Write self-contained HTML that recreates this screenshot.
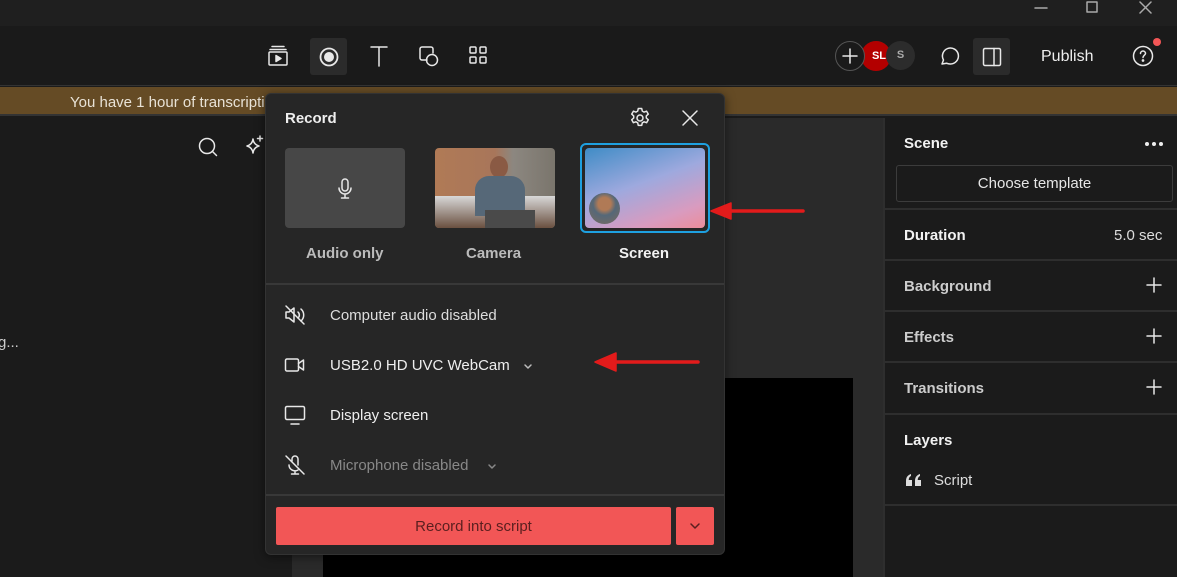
<!DOCTYPE html>
<html><head><meta charset="utf-8"><style>
*{box-sizing:border-box;margin:0;padding:0}
body{width:1177px;height:577px;overflow:hidden;background:#1b1b1b;font-family:"Liberation Sans",sans-serif;color:#e6e6e6;position:relative}
.a{position:absolute}
svg{position:absolute;fill:none;stroke:#e8e8e8;stroke-width:1.5;stroke-linecap:round;stroke-linejoin:round}
.t{position:absolute;font-size:15px;white-space:nowrap}
.b{font-weight:bold}
.row{position:absolute;left:884px;width:293px;border-top:2px solid #2e2e2e}
</style></head><body>
<div class="a" style="left:0;top:0;width:1177px;height:26px;background:#1f1f1f"></div>
<svg style="left:1030px;top:0" width="140" height="20" viewBox="0 0 140 20"><path d="M5 8h12" stroke="#aaa"/><path d="M57 2h10v10H57z" stroke="#aaa"/><path d="M110 2l11 11M121 2l-11 11" stroke="#aaa"/></svg>
<div class="a" style="left:0;top:26px;width:1177px;height:60px;background:#1a1a1a;border-bottom:1px solid #333"></div>
<svg style="left:266px;top:44px" width="24" height="24" viewBox="0 0 24 24"><path d="M6 2.5h12M4 5.5h16"/><rect x="3" y="8" width="18" height="13" rx="1"/><path d="M10 11.5v6l5-3z" fill="#e8e8e8"/></svg>
<div class="a" style="left:310px;top:38px;width:37px;height:37px;background:#2b2b2b;border-radius:3px"></div>
<svg style="left:317px;top:45px" width="24" height="24" viewBox="0 0 24 24"><circle cx="12" cy="12" r="8.5" stroke-width="1.8"/><circle cx="12" cy="12" r="5" fill="#e8e8e8" stroke="none"/></svg>
<svg style="left:367px;top:44px" width="24" height="24" viewBox="0 0 24 24"><path d="M4 3h16M12 3v19"/></svg>
<svg style="left:417px;top:44px" width="24" height="24" viewBox="0 0 24 24"><path d="M10 16H5a2 2 0 01-2-2V5a2 2 0 012-2h9a2 2 0 012 2v4"/><circle cx="15" cy="16" r="5.5"/></svg>
<svg style="left:467px;top:44px" width="24" height="24" viewBox="0 0 24 24"><rect x="3" y="3" width="6" height="6" rx="1"/><rect x="13" y="3" width="6" height="6" rx="1"/><rect x="3" y="13" width="6" height="6" rx="1"/><rect x="13" y="13" width="6" height="6" rx="1"/></svg>
<div class="a" style="left:862px;top:41px;width:29px;height:29px;border-radius:50%;background:#2c2c2c"></div>
<div class="a" style="left:861px;top:41px;width:30px;height:30px;border-radius:50%;background:#b30000;color:#fff;font-size:11px;font-weight:bold;text-align:center;line-height:30px;padding-left:6px">SL</div>
<div class="a" style="left:886px;top:41px;width:29px;height:29px;border-radius:50%;background:#2c2c2c;color:#aaa;font-size:11px;font-weight:bold;text-align:center;line-height:29px">S</div>
<div class="a" style="left:835px;top:41px;width:30px;height:30px;border-radius:50%;background:#1a1a1a;border:1px solid #555"></div>
<svg style="left:840px;top:46px" width="20" height="20" viewBox="0 0 20 20"><path d="M10 3v14M3 10h14"/></svg>
<svg style="left:938px;top:44px" width="24" height="24" viewBox="0 0 24 24"><path d="M4 20l1.5-4A8 8 0 1112 20a8 8 0 01-3.5-.8z"/></svg>
<div class="a" style="left:973px;top:38px;width:37px;height:37px;background:#2b2b2b;border-radius:3px"></div>
<svg style="left:980px;top:45px" width="24" height="24" viewBox="0 0 24 24"><rect x="3.5" y="3.5" width="17" height="17" rx="1.5"/><path d="M14 3.5v17"/></svg>
<div class="t" style="left:1041px;top:48px;font-size:16px;color:#eee">Publish</div>
<svg style="left:1131px;top:44px" width="24" height="24" viewBox="0 0 24 24"><circle cx="12" cy="12" r="9.5"/><path d="M9.5 9.5a2.5 2.5 0 115 0c0 1.5-2.5 2-2.5 4"/><circle cx="12" cy="16.5" r=".6" fill="#e8e8e8"/></svg>
<div class="a" style="left:1153px;top:38px;width:8px;height:8px;border-radius:50%;background:#f25656"></div>
<div class="a" style="left:0;top:87px;width:1177px;height:29px;background:#654b25;border-bottom:2px solid #333"></div>
<div class="t" style="left:70px;top:94px;color:#e8e2d6">You have 1 hour of transcription</div>
<div class="a" style="left:292px;top:118px;width:591px;height:459px;background:#2a2a2a"></div>
<div class="a" style="left:323px;top:378px;width:530px;height:199px;background:#000"></div>
<div class="a" style="left:883px;top:118px;width:294px;height:459px;background:#1b1b1b;border-left:2px solid #2e2e2e"></div>
<svg style="left:196px;top:135px" width="24" height="24" viewBox="0 0 24 24"><circle cx="11" cy="11" r="7.5"/><path d="M16.5 16.5l4 4"/></svg>
<svg style="left:240px;top:134px" width="26" height="26" viewBox="0 0 26 26"><path d="M13 5c.5 4 2.5 6 6 7-3.5 1-5.5 3-6 7-.5-4-2.5-6-6-7 3.5-1 5.5-3 6-7z"/><path d="M20 2v5M17.5 4.5h5"/></svg>
<div class="t" style="left:-2px;top:334px;color:#ccc">g...</div>
<div class="t b" style="left:904px;top:135px;color:#f2f2f2">Scene</div>
<div class="a" style="left:1145px;top:142px;width:4px;height:4px;border-radius:50%;background:#eee"></div>
<div class="a" style="left:1152px;top:142px;width:4px;height:4px;border-radius:50%;background:#eee"></div>
<div class="a" style="left:1159px;top:142px;width:4px;height:4px;border-radius:50%;background:#eee"></div>
<div class="a" style="left:896px;top:165px;width:277px;height:37px;border:1px solid #3c3c3c;border-radius:3px;text-align:center;line-height:36px;font-size:15px;color:#e6e6e6">Choose template</div>
<div class="row" style="top:208px;height:52px"></div>
<div class="t b" style="left:904px;top:227px;color:#f2f2f2">Duration</div>
<div class="t" style="left:1114px;top:227px;color:#ddd">5.0 sec</div>
<div class="row" style="top:259px;height:52px"></div>
<div class="t b" style="left:904px;top:278px;color:#ccc">Background</div>
<div class="row" style="top:310px;height:52px"></div>
<div class="t b" style="left:904px;top:329px;color:#ccc">Effects</div>
<div class="row" style="top:361px;height:52px"></div>
<div class="t b" style="left:904px;top:380px;color:#ccc">Transitions</div>
<svg style="left:1145px;top:276px" width="18" height="130" viewBox="0 0 18 130"><path d="M9 2v14M2 9h14M9 53v14M2 60h14M9 104v14M2 111h14"/></svg>
<div class="row" style="top:413px;height:93px;border-bottom:2px solid #2e2e2e"></div>
<div class="t b" style="left:904px;top:432px;color:#f2f2f2">Layers</div>
<svg style="left:905px;top:473px" width="18" height="14" viewBox="0 0 18 14" style="stroke:none"><path d="M1 13V8c0-4 2-6 5-7v2c-1.5.7-2.2 2-2.3 4H7v6zM10 13V8c0-4 2-6 5-7v2c-1.5.7-2.2 2-2.3 4H16v6z" fill="#ddd" stroke="none"/></svg>
<div class="t" style="left:934px;top:472px;color:#ddd">Script</div>
<div class="a" style="left:265px;top:93px;width:460px;height:462px;background:#262626;border:1px solid #333;border-radius:6px;box-shadow:0 2px 10px rgba(0,0,0,.5)"></div>
<div class="t b" style="left:285px;top:110px;font-size:15px;color:#eee">Record</div>
<svg style="left:628px;top:106px" width="24" height="24" viewBox="0 0 24 24"><circle cx="12" cy="12" r="3"/><path d="M10.3 2.5h3.4l.6 2.6 1.8 1 2.5-.9 1.7 2.9-2 1.8v2.1l2 1.8-1.7 2.9-2.5-.9-1.8 1-.6 2.6h-3.4l-.6-2.6-1.8-1-2.5.9-1.7-2.9 2-1.8V9.9l-2-1.8 1.7-2.9 2.5.9 1.8-1z"/></svg>
<svg style="left:679px;top:107px" width="22" height="22" viewBox="0 0 22 22"><path d="M4 4l14 14M18 4L4 18"/></svg>
<div class="a" style="left:285px;top:148px;width:120px;height:80px;background:#474747;border-radius:4px"></div>
<svg style="left:335px;top:177px" width="20" height="24" viewBox="0 0 20 24"><rect x="7" y="2" width="6" height="12" rx="3"/><path d="M4 11a6 6 0 0012 0M10 17v4M6.5 21h7"/></svg>
<div class="a" style="left:435px;top:148px;width:120px;height:80px;border-radius:4px;overflow:hidden;background:linear-gradient(90deg,#b07a56 0%,#a8765a 50%,#8c8780 65%,#7a756c 100%)">
 <div class="a" style="left:0;top:48px;width:120px;height:32px;background:linear-gradient(#d8d8d8,#6a5040)"></div>
 <div class="a" style="left:55px;top:8px;width:18px;height:22px;border-radius:50%;background:#8a5a44"></div>
 <div class="a" style="left:40px;top:28px;width:50px;height:40px;border-radius:14px 14px 0 0;background:#566878"></div>
 <div class="a" style="left:50px;top:62px;width:50px;height:18px;background:#4a4a4a"></div>
</div>
<div class="a" style="left:580px;top:143px;width:130px;height:90px;border:2px solid #1ea0e0;border-radius:6px"></div>
<div class="a" style="left:585px;top:148px;width:120px;height:80px;border-radius:4px;background:linear-gradient(160deg,#3f8cc6 0%,#9ea9de 45%,#d99bbf 80%,#ec8d9a 100%)"></div>
<div class="a" style="left:589px;top:193px;width:31px;height:31px;border-radius:50%;background:radial-gradient(circle at 50% 35%,#b07a56 0 25%,#556878 45%,#7a6a60 100%)"></div>
<div class="t b" style="left:306px;top:245px;color:#bbb">Audio only</div>
<div class="t b" style="left:466px;top:245px;color:#bbb">Camera</div>
<div class="t b" style="left:619px;top:245px;color:#f2f2f2">Screen</div>
<div class="a" style="left:266px;top:283px;width:458px;height:2px;background:#383838"></div>
<svg style="left:283px;top:303px" width="24" height="24" viewBox="0 0 24 24"><path d="M3 9h3l5-4v14l-5-4H3z"/><path d="M15 9a4 4 0 010 6M18 6a8 8 0 010 12"/><path d="M3 3l18 18"/></svg>
<div class="t" style="left:330px;top:307px;color:#ddd">Computer audio disabled</div>
<svg style="left:283px;top:353px" width="24" height="24" viewBox="0 0 24 24"><rect x="2.5" y="6" width="13" height="12" rx="1.5"/><path d="M15.5 10.5l5-3.5v10l-5-3.5"/></svg>
<div class="t" style="left:330px;top:357px;color:#eee">USB2.0 HD UVC WebCam</div>
<svg style="left:522px;top:360px" width="12" height="12" viewBox="0 0 12 12"><path d="M3 5l3 3 3-3" stroke="#bbb"/></svg>
<svg style="left:283px;top:403px" width="24" height="24" viewBox="0 0 24 24"><rect x="2.5" y="3.5" width="19" height="13" rx="1.5"/><path d="M8 21h8"/></svg>
<div class="t" style="left:330px;top:407px;color:#eee">Display screen</div>
<svg style="left:283px;top:453px" width="24" height="24" viewBox="0 0 24 24"><path d="M9 8V6a3 3 0 016 0v6M6 12a6 6 0 009 5M12 18v3M8.5 21h7"/><path d="M3 3l18 18"/></svg>
<div class="t" style="left:330px;top:457px;color:#888">Microphone disabled</div>
<svg style="left:486px;top:460px" width="12" height="12" viewBox="0 0 12 12"><path d="M3 5l3 3 3-3" stroke="#888"/></svg>
<div class="a" style="left:266px;top:494px;width:458px;height:2px;background:#383838"></div>
<div class="a" style="left:276px;top:507px;width:395px;height:38px;background:#f25656;border-radius:2px;text-align:center;line-height:39px;font-size:15px;color:#5a1f1f">Record into script</div>
<div class="a" style="left:676px;top:507px;width:38px;height:38px;background:#f25656;border-radius:2px"></div>
<svg style="left:687px;top:518px" width="16" height="16" viewBox="0 0 16 16"><path d="M4 6l4 4 4-4" stroke="#5a1f1f"/></svg>
<svg style="left:705px;top:195px" width="100" height="30" viewBox="0 0 100 30"><path d="M24 16h74" stroke="#e31b1b" stroke-width="3.5"/><path d="M6 16l20-8v16z" fill="#e31b1b" stroke="#e31b1b"/></svg>
<svg style="left:590px;top:348px" width="112" height="30" viewBox="0 0 112 30"><path d="M24 14h84" stroke="#e31b1b" stroke-width="3.5"/><path d="M5 14l21-9v18z" fill="#e31b1b" stroke="#e31b1b"/></svg>
</body></html>
